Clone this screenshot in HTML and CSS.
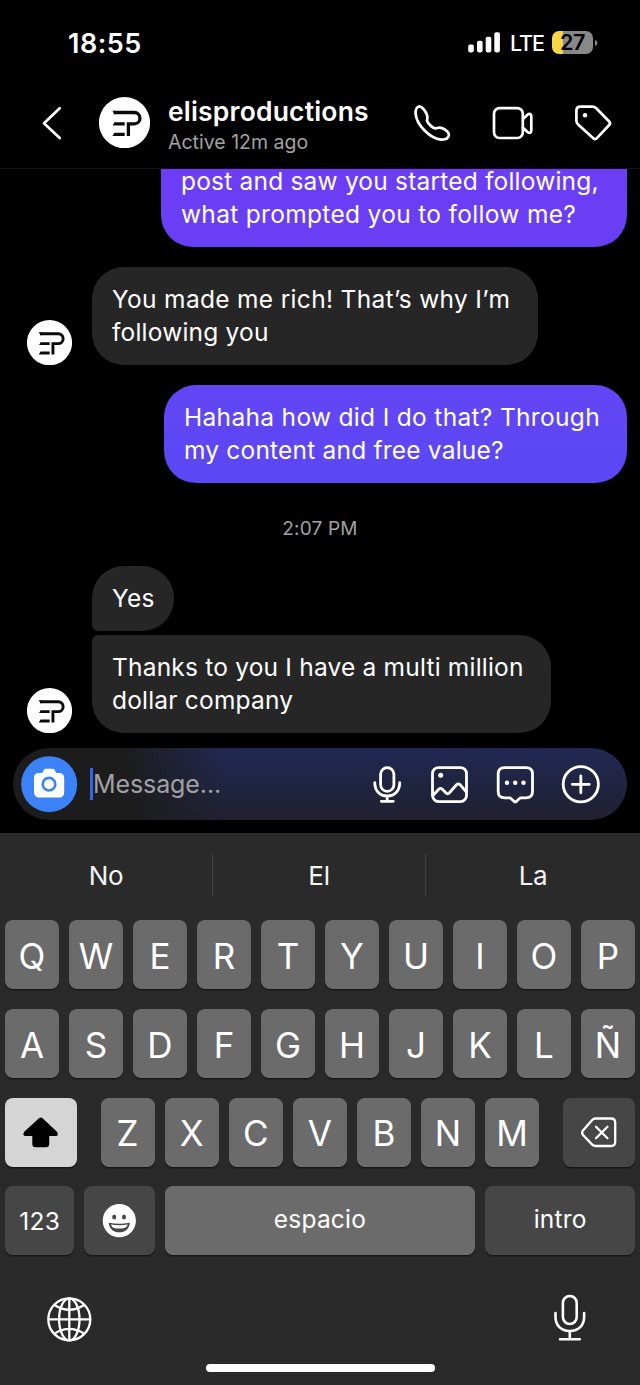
FILE: index.html
```html
<!DOCTYPE html>
<html lang="es">
<head>
<meta charset="utf-8">
<title>elisproductions</title>
<link rel="stylesheet" href="styles.css">
</head>
<body>
<svg class="defs" width="0" height="0">
  <symbol id="ep" viewBox="99 97 51 51">
    <circle cx="124.5" cy="122.7" r="25.6" fill="#fff"/>
    <path d="M114 112.500H134.300a5.650 5.650 0 0 1 0 11.300H128.400V136" fill="none" stroke="#0a0a0c" stroke-width="3.300"/>
    <path d="M112.400 110.850h3v3.300h-1.200zM114.400 122.150h10.300v3.300h-12zM114.400 132.700h10.300v3.300h-12.300z" fill="#0a0a0c"/>
  </symbol>
</svg>
<div class="phone">
  <div class="status">
    <span class="clock">18:55</span>
    <svg class="signal" viewBox="468 31 33 23" width="33" height="23" fill="#fff">
      <rect x="468.2" y="44.6" width="5.6" height="7.8" rx="1.8"/><rect x="477" y="40.8" width="5.6" height="11.6" rx="1.8"/><rect x="485.7" y="36.8" width="5.6" height="15.6" rx="1.8"/><rect x="494.3" y="32.3" width="5.6" height="20.1" rx="1.8"/>
    </svg>
    <span class="lte">LTE</span>
    <span class="battery">27</span>
    <svg class="knob" width="4" height="8"><path d="M1 1C4.200 2.200 4.200 5.800 1 7Z" fill="#888"/></svg>
  </div>
  <header class="header">
    <svg class="back" viewBox="40 104 24 38" width="24" height="38"><path d="M59.700 108.300 44 123.200l15.700 14.800" fill="none" stroke="#fff" stroke-width="2.700" stroke-linecap="round" stroke-linejoin="round"/></svg>
    <svg class="avatar-lg"><use href="#ep"/></svg>
    <div class="who"><div class="name">elisproductions</div><div class="active">Active 12m ago</div></div>
    <svg class="header-icons" viewBox="410 100 206 46" width="206" height="46" fill="none" stroke="#fff" stroke-width="2.700" stroke-linecap="round" stroke-linejoin="round">
      <path d="M419.300 106.400C421.800 106.500 423.800 109.200 425.300 111.500C427.300 114.800 427.900 116.600 427.200 118.700C426.700 120.200 426.800 121.200 427.900 122.600C429.400 124.700 431.300 126.500 433.400 127.800C435 128.700 436 128.700 437.500 128.100C440 127.100 441.900 127.700 445 129.600C448.200 131.700 449.200 133.300 448.800 135.500C448.200 138.300 445.200 139.700 441.500 139.600C436 139.300 429.500 135.500 424.800 130.800C419.700 125.600 416 118.800 415.600 113.600C415.400 109.700 416.900 106.700 419.300 106.400Z"/>
      <rect x="494" y="108.200" width="28.800" height="29.800" rx="5.500"/>
      <path d="M523 119 527.500 114.800C529.500 113 531.300 114 531.300 116.300V130.400C531.300 132.700 529.500 133.700 527.500 131.900L523 127.700"/>
      <path d="M580.500 106.700H592.500C594 106.700 595 107.100 596 108L609.200 121.500C610.300 122.700 610.300 123.900 609.200 125L596.900 138.200C595.700 139.500 594.500 139.500 593.300 138.300L578.100 124.500C576.900 123.400 576.400 122.300 576.400 120.700V110.800C576.400 108.200 578 106.700 580.500 106.700Z"/>
      <circle cx="585" cy="115.300" r="2.200" fill="#fff" stroke="none"/>
    </svg>
  </header>
  <main class="chat">
    <div class="bubble out first">post and saw you started following,<br><span class="loose">what prompted you to follow me?</span></div>
    <div class="row r1"><svg class="avatar"><use href="#ep"/></svg><div class="bubble in b1"><span class="loose">You made me rich! That’s why I’m</span><br>following you</div></div>
    <div class="bubble out second"><span class="loose">Hahaha how did I do that? Through</span><br>my content and free value?</div>
    <div class="time">2:07 PM</div>
    <div class="row"><div class="bubble in b2">Yes</div></div>
    <div class="row r3"><svg class="avatar"><use href="#ep"/></svg><div class="bubble in b3">Thanks to you I have a multi million<br>dollar company</div></div>
  </main>
  <div class="composer">
    <svg viewBox="21 756 57 57" width="57" height="57">
      <circle cx="49.200" cy="784.200" r="28" fill="#3b82f6"/>
      <path d="M39 773H41.500C42.500 773 42.700 772.500 43.200 771.300C44 769.300 45 768.700 46.500 768.700H52C53.600 768.700 54.600 769.300 55.300 771.300C55.800 772.500 56 773 57 773H59C62.500 773 64.200 774.800 64.200 778V792C64.200 795.500 62.500 797.500 59 797.500H39.500C36 797.500 34 795.500 34 792V778C34 774.800 35.800 773 39 773Z" fill="#fff"/>
      <circle cx="49" cy="784.200" r="6.300" fill="none" stroke="#3b82f6" stroke-width="2.600"/>
    </svg>
    <i class="caret"></i><span class="placeholder">Message...</span>
    <svg class="tools" viewBox="370 762 234 44" width="234" height="44" fill="none" stroke="#fff" stroke-width="2.800" stroke-linecap="round" stroke-linejoin="round">
      <rect x="380.600" y="767.700" width="13.300" height="23.600" rx="6.600"/>
      <path d="M374.800 782.700C374.800 790.500 379.500 796 387.200 796S399.700 790.500 399.700 782.700M387.200 796.500V800.500M381.300 801.300H393.300" />
      <rect x="432.500" y="767.600" width="34" height="34" rx="6"/>
      <circle cx="440.700" cy="775.300" r="2.500" fill="#fff" stroke="none"/>
      <path d="M433 795.500 438.700 789.200Q440.500 787.600 442.300 789.200L446.300 793.200Q447.700 794.500 449 793.200L456.500 784.800Q458.400 783 460.200 784.800L466 791.500"/>
      <path d="M504.500 767.700H526Q532.500 767.700 532.500 774V791.500Q532.500 797.800 526 797.800H520.500L516.500 801.300Q515.300 802.300 514 801.300L510 797.800H504.500Q498.200 797.800 498.200 791.500V774Q498.200 767.700 504.500 767.700Z"/>
      <g fill="#fff" stroke="none"><circle cx="507" cy="782.700" r="2.200"/><circle cx="515.200" cy="782.700" r="2.200"/><circle cx="523.500" cy="782.700" r="2.200"/></g>
      <circle cx="580.800" cy="784.300" r="17.600"/><path d="M572.300 784.300H589.300M580.800 775.800V792.800"/>
    </svg>
  </div>
  <section class="keyboard">
    <div class="suggest"><span>No</span><span>El</span><span>La</span></div>
    <div class="keys">
      <div class="krow"><b>Q</b><b>W</b><b>E</b><b>R</b><b>T</b><b>Y</b><b>U</b><b>I</b><b>O</b><b>P</b></div>
      <div class="krow"><b>A</b><b>S</b><b>D</b><b>F</b><b>G</b><b>H</b><b>J</b><b>K</b><b>L</b><b>Ñ</b></div>
      <div class="krow third">
        <b class="shift"><svg viewBox="20 1113 42 38" width="42" height="38"><path d="M39 1118.300Q40.800 1116.600 42.600 1118.300L57 1131.700Q59.300 1136 55.500 1136H49.200V1144Q49.200 1147.200 46 1147.200H35.500Q32.300 1147.200 32.300 1144V1136H26Q21.800 1136 24.200 1131.700Z" fill="#000"/></svg></b>
        <div class="letters"><b>Z</b><b>X</b><b>C</b><b>V</b><b>B</b><b>N</b><b>M</b></div>
        <b class="dark del"><svg viewBox="578 1113 42 38" width="42" height="38" fill="none" stroke="#fff" stroke-width="2.300" stroke-linecap="round" stroke-linejoin="round"><path d="M595.500 1118.500H611Q615.200 1118.500 615.200 1122.500V1142Q615.200 1146 611 1146H595.500Q593.600 1146 592.200 1144.600L583 1135Q581.200 1132.700 583 1130.500L592.200 1120Q593.600 1118.500 595.500 1118.500ZM596 1126.800 607.500 1138.200M607.500 1126.800 596 1138.200"/></svg></b>
      </div>
      <div class="krow fourth">
        <b class="dark num">123</b>
        <b class="dark emoji"><svg viewBox="101 1203 36 36" width="36" height="36"><circle cx="119.300" cy="1220.700" r="16.600" fill="#fff"/><g fill="#464646"><ellipse cx="114.200" cy="1217" rx="2" ry="2.500"/><ellipse cx="124" cy="1217" rx="2" ry="2.500"/><path d="M108.700 1222.700Q119.300 1224.700 129.900 1222.700C129.300 1229 125 1232.300 119.300 1232.300S109.300 1229 108.700 1222.700Z"/></g><path d="M110.800 1224.600Q119.300 1226 127.800 1224.600Q127 1227.200 124.500 1227.900Q119.300 1229 114.100 1227.900Q111.700 1227.200 110.800 1224.600Z" fill="#fff"/></svg></b>
        <b class="space">espacio</b><b class="dark intro">intro</b>
      </div>
    </div>
    <div class="bottom">
      <svg viewBox="46 1296 48 48" width="48" height="48" fill="none" stroke="#fff" stroke-width="2.300"><circle cx="69.300" cy="1319.300" r="21"/><ellipse cx="69.300" cy="1319.300" rx="10.200" ry="21"/><path d="M69.300 1298V1340.600M48 1319.300H90.600M54.500 1305Q69.300 1314.500 84.100 1305M54.500 1333.600Q69.300 1324.100 84.100 1333.600"/></svg>
      <svg viewBox="552 1292 36 52" width="36" height="52" fill="none" stroke="#fff" stroke-width="2.600" stroke-linecap="round"><rect x="562.900" y="1296" width="13.800" height="28" rx="6.900"/><path d="M555.500 1313V1317C555.500 1325.500 561 1331 569.800 1331S584.100 1325.500 584.100 1317V1313M569.800 1331V1339.300M560 1339.300H579.800"/></svg>
    </div>
    <div class="home"></div>
  </section>
</div>
</body>
</html>
```
FILE: styles.css
```css
* { box-sizing: border-box; }
body { margin: 0; background: #000; color: #fff; font-family: Inter, "Noto Sans", sans-serif; }
svg { display: block; flex: none; }
.defs { position: absolute; }
.phone { width: 640px; height: 1385px; overflow: hidden; display: flex; flex-direction: column; }
.status { height: 86px; padding: 0 42px 0 68px; display: flex; align-items: center; flex: none; white-space: nowrap; }
.clock { width: 400px; font-size: 27px; font-weight: 600; letter-spacing: .5px; flex: none; }
.signal { margin-top: -1px; }
.lte { width: 42px; margin-left: 9px; font-size: 21.500px; font-weight: 500; letter-spacing: -1.100px; flex: none; }
.battery { width: 41px; height: 23px; margin-top: -1px; border-radius: 7px; background: linear-gradient(90deg, #f8d648 27%, #888 27%); color: #000; font-size: 21.500px; font-weight: 600; line-height: 23px; text-align: center; letter-spacing: -0.5px; flex: none; }
.knob { margin-left: 1px; }
.header { height: 83px; padding: 11px 24px 0 40px; border-bottom: 1px solid #141416; display: flex; align-items: flex-start; flex: none; }
.back { margin-top: 7px; }
.avatar-lg { width: 51px; height: 51px; margin-left: 35px; overflow: visible; }
.who { width: 242px; margin-left: 18px; white-space: nowrap; }
.name { font-size: 26.500px; font-weight: 600; line-height: 28px; padding-bottom: 2px; letter-spacing: .180px; }
.active { font-size: 19.500px; line-height: 30px; color: #a2a2a2; letter-spacing: 0; }
.header-icons { margin-top: 3px; }
.chat { height: 579px; padding: 0 13px 15px 27px; display: flex; flex-direction: column; justify-content: flex-end; overflow: hidden; flex: none; }
.bubble { padding: 15.500px 0 16.500px 20px; border-radius: 32px; font-size: 24.500px; font-weight: 400; line-height: 33px; letter-spacing: .2px; white-space: nowrap; flex: none; }
.loose { letter-spacing: .320px; }
.out { align-self: flex-end; }
.first { width: 466px; padding-top: 48.500px; background: linear-gradient(#6e3cf5, #693ff5); }
.second { width: 463px; background: linear-gradient(#6345f4, #5b48f5); }
.in { background: #262626; }
.row { display: flex; align-items: flex-end; padding-left: 65px; flex: none; }
.row:has(.avatar) { padding-left: 0; }
.avatar { width: 45px; height: 45px; margin-right: 20px; overflow: visible; }
.r1 { margin: 20px 0; }
.r3 { margin-top: 4px; }
.b1 { width: 446px; }
.b2 { width: 82px; border-bottom-left-radius: 6px; }
.b3 { width: 459px; border-top-left-radius: 6px; }
.time { height: 83px; padding-top: 8px; line-height: 75px; text-align: center; font-size: 19px; letter-spacing: .2px; color: #a2a2a2; margin-right: 14px; flex: none; }
.composer { height: 72px; margin: 0 13px; padding-left: 8px; border-radius: 36px; display: flex; align-items: center; flex: none; background: linear-gradient(90deg, #1c1c1c 18%, rgba(28,28,28,0) 34%), linear-gradient(#212853, #20202f); }
.caret { width: 3px; height: 32px; margin-left: 12px; background: #3763e8; }
.placeholder { width: 277px; font-size: 25px; letter-spacing: -.1px; color: #a0a0a5; }
.tools { margin-top: -1px; }
.keyboard { height: 552px; margin-top: 13px; background: #2a2a2a; display: flex; flex-direction: column; flex: none; }
.suggest { height: 87px; padding-top: 21px; display: grid; grid-template-columns: 212px 213px 215px; }
.suggest span { height: 42px; line-height: 43px; font-size: 26px; letter-spacing: -.3px; text-align: center; color: #f4f4f4; }
.suggest span + span { border-left: 1px solid #414141; }
.keys { display: flex; flex-direction: column; gap: 19.700px; padding: 0 5px; margin-top: .4px; }
.krow { display: grid; grid-template-columns: repeat(10, 54px); gap: 10px; height: 69px; }
.krow b { display: flex; align-items: center; justify-content: center; height: 69px; padding-top: 2px; border-radius: 8px; background: #6b6b6b; box-shadow: 0 1.500px 0 #171717; font-size: 35px; font-weight: 400; }
.krow b.dark { background: #464646; }
.third { grid-template-columns: 72px 1fr 72px; gap: 23.500px; }
.letters { display: grid; grid-template-columns: repeat(7, 54px); gap: 10.100px; }
.krow b.shift { background: #d5d5d5; }
.krow b.shift, .krow b.del { padding-top: 0; }
.fourth { grid-template-columns: 69.300px 70.400px 310.600px 149.700px; gap: 10px; }
.krow b.num, .krow b.space, .krow b.intro { font-size: 24.500px; padding: 0; letter-spacing: .2px; }
.krow b.num { padding-top: 1px; }
.krow b.space, .krow b.intro { padding-bottom: 4px; }
.krow b.emoji { padding: 0 1px 0 0; }
.bottom { display: flex; justify-content: space-between; align-items: flex-start; padding: 37px 52px 0 46px; height: 108.400px; }
.bottom svg:first-child { margin-top: 4px; }
.home { width: 229px; height: 8px; margin: 0 auto; border-radius: 4px; background: #fff; }
```
